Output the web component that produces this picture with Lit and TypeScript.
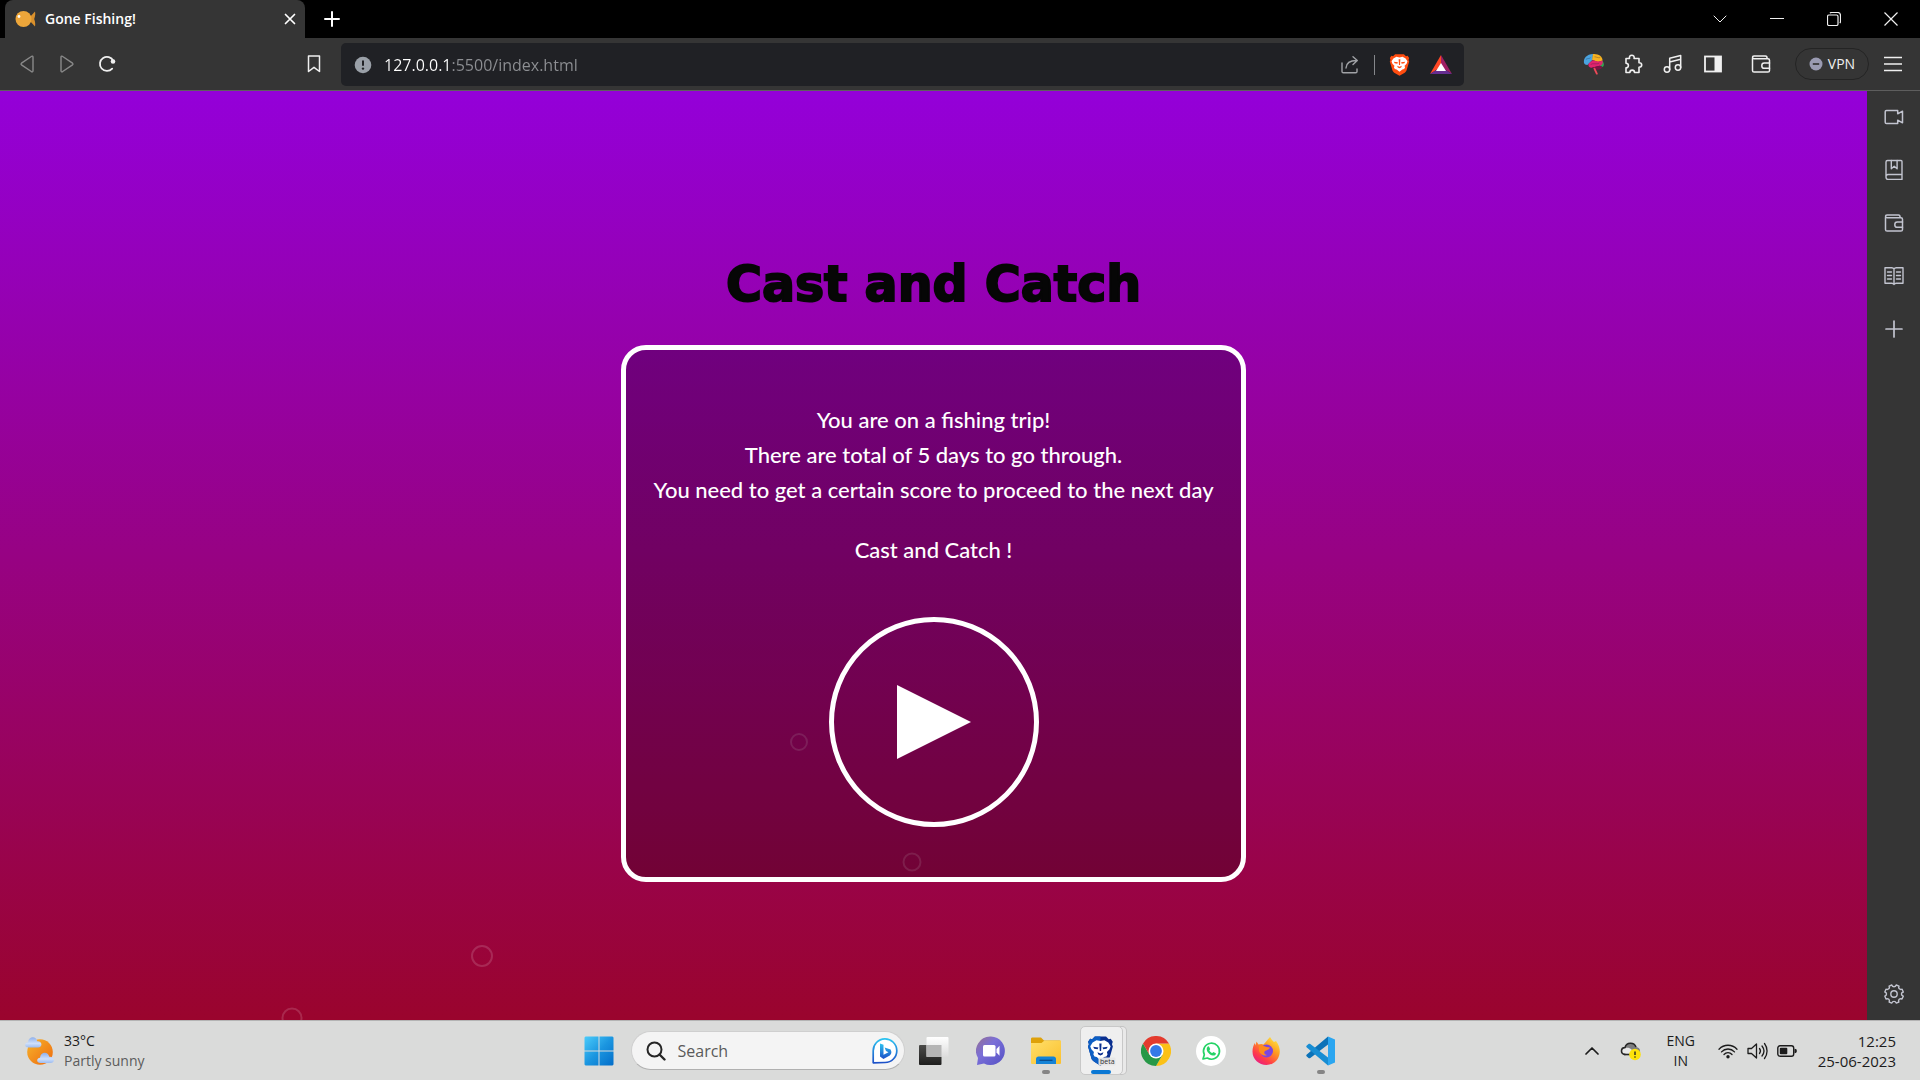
import { LitElement, html, css, svg } from "lit";
import { customElement } from "lit/decorators.js";

const icon = (w: number, h: number, body: unknown, vb = `0 0 ${w} ${h}`) => html`
  <svg width=${w} height=${h} viewBox=${vb} preserveAspectRatio="none" fill="none" aria-hidden="true">${body}</svg>
`;

const line = (body: unknown, width = 1.6) => svg`
  <g stroke="currentColor" stroke-width=${width} stroke-linecap="round" stroke-linejoin="round">${body}</g>
`;

const shield = "M7 1.5h10l2.4 2.6 1.8-.5 1.8 3-.7 2.3.8 2.2-3 11.2c-.5 1.6-1.4 2.6-2.6 3.4L12 29.5l-5.500-3.800c-1.200-.800-2.100-1.800-2.600-3.400L.9 11.100l.8-2.200L1 6.600l1.800-3 1.800.5z";
const lion = svg`
  <path d="M12 5.800l3.500-.8 3.500 2.200 2.100 3.600-1 3-2.300 2.600.5 2.400-1 1.800-2 .6L12 24.300l-3.300-3.100-2-.6-1-1.800.5-2.400-2.300-2.600-1-3L5 7.200 8.500 5z" fill="#fff"/>
  <path d="M5.500 11.200l4.700.9-.7 1.700-3-.5zM18.500 11.200l-4.700.9.7 1.700 3-.5zM11 8.200h2l-.4 7.200h-1.200zM9.300 16.500l2.700 1.300 2.700-1.300-.8 2.200-1.900.9-1.900-.9z" fill="var(--face)"/>
`;

const icons = {
  fish: icon(22, 20, svg`
    <path d="M14 9l6-6.500c.5 2.500.3 4-.8 7.500 1.100 3.500 1.300 5 .8 7.500L14 11z" fill="#d9902c"/>
    <ellipse cx="8.500" cy="10" rx="8" ry="8" fill="#eda63a"/>
    <circle cx="4" cy="7.500" r="1.400" fill="#fff"/>`),
  close: icon(12, 12, line(svg`<path d="M1.500 1.500l9 9M10.500 1.500l-9 9"/>`, 1.7)),
  plus: icon(16, 16, line(svg`<path d="M8 1v14M1 8h14"/>`, 2)),
  chevron: icon(14, 8, line(svg`<path d="M1 1l6 6 6-6"/>`, 1)),
  minimize: icon(14, 2, svg`<path d="M0 .5h14" stroke="currentColor"/>`),
  restore: icon(14, 14, svg`<rect x=".5" y="3" width="10.500" height="10.500" rx="1.500" stroke="currentColor" stroke-width="1.200"/>
    <path d="M3 1.200c.4-.5.8-.7 1.500-.7h6c1.800 0 3 1.200 3 3v6c0 .7-.2 1.100-.7 1.500" stroke="currentColor" stroke-width="1.200"/>`),
  exit: icon(14, 14, svg`<path d="M.5.5l13 13M13.500.5l-13 13" stroke="currentColor" stroke-width="1.200"/>`),
  back: icon(14, 18, line(svg`<path d="M13 2.200v13.600c0 1-1 1.400-1.700.7L1.500 9.800c-.6-.5-.6-1.100 0-1.600l9.800-6.700c.7-.7 1.700-.3 1.700.7z"/>`, 1.4)),
  forward: icon(14, 18, line(svg`<path d="M1 2.200v13.600c0 1 1 1.400 1.700.7l9.800-6.700c.6-.5.6-1.100 0-1.600L2.700 1.500C2 .8 1 1.200 1 2.200z"/>`, 1.4)),
  reload: icon(18, 18, svg`<path d="M14.200 13.600A7 7 0 1 1 15.300 6" stroke="currentColor" stroke-width="1.800" stroke-linecap="round"/>
    <circle cx="15" cy="6.500" r="2.300" fill="currentColor"/>`),
  bookmark: icon(14, 18, line(svg`<path d="M1.500 1h11v15.500L7 12.300l-5.500 4.200z"/>`, 1.5)),
  info: icon(18, 18, svg`<circle cx="9" cy="9" r="8.300" fill="#9aa0a8"/><path d="M9 4.500v5.300" stroke="#202124" stroke-width="2"/><circle cx="9" cy="12.600" r="1.200" fill="#202124"/>`),
  share: icon(20, 20, line(svg`<path d="M2 8v8.500c0 .8.500 1.300 1.300 1.300h12.400c.8 0 1.300-.5 1.300-1.300V14"/><path d="M6 13c.3-5 3.500-7.500 10.500-7.500M13 1.800l4.300 3.700-4.300 4"/>`, 1.4)),
  braveShield: icon(21, 24, svg`<path d=${shield} fill="#ff4d10"/>${lion}`, "0 0 24 31"),
  bat: icon(24, 22, svg`<path d="M12 1L1 20l11-7z" fill="#ff4724"/><path d="M12 1l11 19-11-7z" fill="#9e1f63"/><path d="M1 20h22l-11-7z" fill="#662d91"/><path d="M12 9l-5 8h10z" fill="#fff"/>`),
  brain: icon(21, 22, svg`
    <path d="M20 9c2.500 3 2.200 6 .6 7.500L16 14z" fill="#32a852"/>
    <path d="M1 11.500C.2 6 4 1.500 10.500 1.200L10 8l-5 6c-1.500.3-3.500-.5-4-2.500z" fill="#4aa3df"/>
    <path d="M10.500 1.200C16 .6 20.500 4 20.500 9l-5 1.500L9.500 8z" fill="#f6b221"/>
    <path d="M6 12.500l4-4 6 1.500 4.500-.8c.8 3-.5 5.500-3 6L9 17.500c-2.500 0-4-2.500-3-5z" fill="#e0236f"/>
    <path d="M9.500 17.500l8-2.500 2.800 1.500c-1.300 3-4.800 4-8.300 3z" fill="#7d1046"/>
    <path d="M12 18.500l2.500 6" stroke="#ef4958" stroke-width="2" stroke-linecap="round"/>
    <path d="M3 7.500c2-1.500 4-.5 5-2M12 4.500c2 0 3.500 1.500 6 1M8 13.500c3-2 6 .5 9-1.500" stroke="#2a2335" stroke-opacity=".35"/>`, "0 0 22 26"),
  puzzle: icon(20, 20, line(svg`<path d="M3 4.500h3.500C6 2.300 7.300 1.200 8.800 1.200s2.800 1.100 2.300 3.300H16v4.300c1.700 0 2.700.9 2.700 2.200s-1 2.200-2.700 2.200V18.500h-4.500c0-1.600-.9-2.400-2.300-2.400s-2.300.8-2.300 2.400H3v-4.700c1.500 0 2.400-.9 2.400-2.300S4.500 9.200 3 9.200z"/>`, 1.6)),
  music: icon(20, 20, line(svg`<circle cx="4" cy="15.500" r="2.700"/><circle cx="15" cy="13.500" r="2.700"/><path d="M6.700 15.500V4.200l11-2.700v12M6.700 8l11-2.700"/>`, 1.5)),
  panel: icon(18, 18, svg`<rect x="1" y="1.500" width="16" height="15" stroke="currentColor" stroke-width="1.800"/><path d="M10.500 1.500H17v15h-6.500z" fill="currentColor"/>`),
  wallet: icon(20, 20, line(svg`<path d="M1.500 4.500v12c0 1 .6 1.600 1.600 1.600h13.800c1 0 1.600-.6 1.600-1.600V6.300c0-1-.6-1.600-1.600-1.600H3C1 4.700 1 2 3 2h11.500c1 0 1.600.7 1.600 2.500"/><path d="M18.500 9h-5.300c-3.200 0-3.200 5.300 0 5.300h5.300"/>`, 1.5)),
  menu: icon(18, 16, svg`<path d="M0 1.500h18M0 8h18M0 14.500h18" stroke="currentColor" stroke-width="1.700"/>`),
  minus: icon(14, 14, svg`<circle cx="7" cy="7" r="6.500" fill="#9a9bb2"/><path d="M3.800 7h6.400" stroke="#333" stroke-width="1.700"/>`),
  camera: icon(20, 16, line(svg`<path d="M2.500 1.500h11.200v3.300l4.800-2.600v11.600l-4.800-2.600v3.300H2.500c-.9 0-1.300-.5-1.300-1.300V2.800c0-.8.400-1.300 1.300-1.300z"/>`, 1.5)),
  book: icon(20, 22, line(svg`<path d="M18 15.500V2.500c0-.6-.4-1-1-1H3.500C2.500 1.500 2 2 2 3v15c0 1.600.7 2.400 2 2.400h14M2 17.700c0-1.400.7-2.200 2-2.200h14v4.900"/><path d="M7.300 1.500v8.300l2.900-2.600 2.900 2.600V1.500"/>`, 1.4)),
  reader: icon(20, 20, line(svg`<path d="M10 3c-.5-1-1.200-1.300-2.200-1.300H1v15.500h6.800c1 0 1.700.3 2.200 1.300.5-1 1.200-1.300 2.200-1.300H19V1.700h-6.800c-1 0-1.700.3-2.200 1.300zM10 3v15.500M3.500 6H7.500M3.500 9.500H7.500M3.500 13H7.500M12.500 6h4M12.500 9.500h4M12.500 13h4"/>`, 1.4)),
  add: icon(18, 18, line(svg`<path d="M9 1v16M1 9h16"/>`, 1.7)),
  gear: icon(20, 20, line(svg`<circle cx="10" cy="10" r="3.200"/><path d="M7.800 1c.8 2.300 3.600 2.300 4.400 0l2.800 1.100c-1 2.300.9 4 3.100 3.100l1.200 2.800c-2.500.8-2.500 3.300 0 4.100L18 15c-2.200-1-4.100.8-3.100 3l-2.700 1.100c-.8-2.300-3.600-2.300-4.400 0L5.100 18c1-2.200-.9-4-3.100-3L.8 12.100c2.300-.8 2.300-3.300 0-4.100L2 5.200c2.200.9 4.100-.8 3.100-3.100z"/>`, 1.4)),
  play: icon(76, 74, svg`<path d="M1 0l74 37-74 37z" fill="currentColor"/>`),
  weather: icon(32, 32, svg`
    <defs>
      <linearGradient id="sun" x1="0" y1="0" x2="1" y2="1"><stop stop-color="#f6b42c"/><stop offset="1" stop-color="#ee6a0e"/></linearGradient>
      <linearGradient id="cloud" x1="0" y1="0" x2="0" y2="1"><stop stop-color="#8fb0ec"/><stop offset=".6" stop-color="#cfe0fb"/><stop offset="1" stop-color="#9dbcf0"/></linearGradient>
    </defs>
    <circle cx="16" cy="17" r="12.800" fill="url(#sun)"/>
    <path d="M4.500 12.500C.2 12.500.2 7.500 4 7.200 4.500 1 12.500.8 13.200 6.200c5.300-.5 5.800 6.300.8 6.300z" fill="url(#cloud)"/>
    <path d="M16.500 28c-4.300 0-4.300-5-.5-5.300.5-6.200 8.300-6.400 9.200-1 6-.5 6.300 6.300 1.300 6.300z" fill="url(#cloud)"/>`),
  start: icon(30, 30, svg`
    <defs><linearGradient id="win" x1="0" y1="0" x2="30" y2="30" gradientUnits="userSpaceOnUse"><stop stop-color="#4ccdfb"/><stop offset=".5" stop-color="#1b96e0"/><stop offset="1" stop-color="#026cc8"/></linearGradient></defs>
    <path d="M1.500.5h13v14H.5v-13zM15.500.5h13l1 1v13h-14zM.5 15.500h14v14h-13l-1-1zM15.500 15.500h14v13l-1 1h-13z" fill="url(#win)"/>`),
  search: icon(20, 20, svg`<circle cx="8.500" cy="8.500" r="7" stroke="#262626" stroke-width="2"/><path d="M13.500 13.500l5 5" stroke="#262626" stroke-width="2.400" stroke-linecap="round"/>`),
  bing: icon(26, 26, svg`
    <defs><linearGradient id="bing" x1="0" y1="0" x2="0" y2="1"><stop stop-color="#2cc3f0"/><stop offset="1" stop-color="#1c50c8"/></linearGradient></defs>
    <path d="M1.200 24.800V13A11.800 11.800 0 1 1 13 24.500z" stroke="url(#bing)" stroke-width="1.700" stroke-linejoin="round" fill="#fff"/>
    <path d="M8 5.500l3.500 1.300v10l5-2.600-2.500-1.300-1.400-3.500 6 2.200c1.500 2.700.8 4.600-.8 5.800l-6.400 3.500L8 18.500z" fill="url(#bing)"/>`),
  taskview: icon(30, 28, svg`
    <defs>
      <linearGradient id="tvd" x1="0" y1="0" x2="0" y2="1"><stop stop-color="#4b4b49"/><stop offset="1" stop-color="#1e1e1d"/></linearGradient>
      <linearGradient id="tvl" x1="0" y1="0" x2="0" y2="1"><stop stop-color="#fff"/><stop offset="1" stop-color="#dcdcdc"/></linearGradient>
    </defs>
    <rect y="8" width="22.500" height="20" rx="1" fill="url(#tvd)"/><rect x="7.500" width="22" height="20" rx="1" fill="url(#tvl)"/>
    <rect x="7.500" y="8" width="15" height="12" fill="#b5b5b5"/>`),
  chat: icon(30, 30, svg`
    <defs><linearGradient id="chat" x1="0" y1="0" x2="1" y2="1"><stop stop-color="#97708f"/><stop offset=".4" stop-color="#7a6fd8"/><stop offset="1" stop-color="#5450c4"/></linearGradient></defs>
    <path d="M15 .5A14.300 14.300 0 1 1 8 27.500L1 29l1-7A14.300 14.300 0 0 1 15 .5z" fill="url(#chat)"/>
    <rect x="7" y="9" width="12.500" height="11.500" rx="1.500" fill="#fff"/><path d="M20.500 13l3-3.200v10l-3-3.200z" fill="#fff"/>`),
  folder: icon(32, 28, svg`
    <defs><linearGradient id="fold" x1="0" y1="0" x2="1" y2="1"><stop stop-color="#ffdf6b"/><stop offset="1" stop-color="#fbc02d"/></linearGradient></defs>
    <path d="M1 2c0-1 .5-1.500 1.500-1.500H11l3 3h15c1 0 1.500.5 1.500 1.500v8H1z" fill="#dea10a"/>
    <path d="M1 6h10.500l3-2.500H31v22c0 1-.5 1.500-1.500 1.500h-27C1.500 27 1 26.500 1 25.500z" fill="url(#fold)"/>
    <path d="M6 27v-5c0-1.600 1-2.500 2.500-2.500h15c1.500 0 2.500.9 2.500 2.500v5z" fill="#1583d6"/><path d="M9.500 23.300h13" stroke="#0b4b8c" stroke-width="1.300"/>`),
  chrome: icon(30, 30, svg`
    <path d="M15 15v-7.500h13A15 15 0 0 1 15 30l6.500-11.200z" fill="#fbc116"/>
    <path d="M2 7.500A15 15 0 0 0 15 30l6.500-11.300L8.500 18.800z" fill="#279847"/><path d="M2 7.500A15 15 0 0 1 28 7.500H15L8.500 18.700z" fill="#e33b2e"/>
    <circle cx="15" cy="15" r="7.500" fill="#fff"/><circle cx="15" cy="15" r="5.900" fill="#3479e8"/>`),
  whatsapp: icon(30, 30, svg`
    <circle cx="15" cy="15" r="15" fill="#fff"/>
    <path d="M7 23l1.300-4.300A8 8 0 1 1 11.300 22z" stroke="#25d366" stroke-width="1.700" stroke-linejoin="round"/>
    <path d="M11.600 10.800l1.200-.5 1.400 2.800-.8 1.300c.7 1.300 1.600 2.100 2.900 2.700l1-1.200 2.600 1.300c.1 1.800-1.400 2.700-3.200 2.300-3-.7-6-3.700-6-6.600 0-.8.300-1.500.9-2.100z" fill="#25d366"/>`),
  firefox: icon(30, 30, svg`
    <defs><linearGradient id="ff" x1=".9" y1="0" x2=".2" y2="1"><stop stop-color="#fff04a"/><stop offset=".4" stop-color="#ff9a1f"/><stop offset=".75" stop-color="#ff3b4a"/><stop offset="1" stop-color="#e51a8a"/></linearGradient></defs>
    <path d="M19 1c1.500 2 2 3.500 4 5l2-1c3 4 4.300 8.500 3.600 12.500C27.500 24.500 22 29 15.500 29 8 29 1.500 23.500 1.500 15.500c0-3.500 1-6.500 2.300-8.500l.7 2.500 1-4 2 3c2-.7 3.500-.7 5 0 2-1.500 3.500-4.500 6.500-7.500z" fill="url(#ff)"/>
    <circle cx="15.500" cy="15" r="6.500" fill="#7b45e0"/>
    <path d="M8 10c3-1 5 0 7.500 1l3.500.5c-1 2.500-3.500 2.500-5 3.500-1.500 1.500-.5 3.500 2 4-3 1.500-7-.5-8-4z" fill="#ff8a1c"/>`),
  vscode: icon(30, 30, svg`
    <path d="M22 .5L29 3.500v23l-7 3z" fill="#2ba6f0"/>
    <path d="M22 .5L.8 18.500c-.7.600-.7 1.300 0 1.900l1.700 1.500c.6.500 1.100.5 1.800.1L22 8.500z" fill="#0b72b8"/>
    <path d="M22 29.500L.8 11.500c-.7-.6-.7-1.300 0-1.900l1.700-1.500c.6-.5 1.100-.5 1.800-.1L22 21.500z" fill="#178dd3"/>`),
  braveApp: icon(30, 30, svg`
    <g transform="translate(1 -1) scale(1.120 1.040)"><path d=${shield} fill="#0a2f8f"/><path d="M12 1.500H7L4.600 4.100l-1.800-.5-1.800 3 .7 2.300-.8 2.200 3 11.200c.5 1.600 1.400 2.600 2.600 3.400l5.500 3.800z" fill="#0d5fc4"/>${lion}</g>
    <rect x="12.500" y="21.500" width="17" height="8" rx="1" fill="#e6e6e6" fill-opacity=".95"/>
    <text x="14" y="28" font-size="7" font-family="Open Sans, sans-serif" fill="#333">beta</text>`),
  caret: icon(14, 8, line(svg`<path d="M1 7l6-6 6 6"/>`, 1.7)),
  onedrive: icon(22, 20, svg`
    <path d="M5.500 13.500C0 13.500.5 6.500 5 6.500 6.500 1 14 .8 16 6c3.500.3 4.500 3 4 5.500z" fill="#7d7d7d"/>
    <path d="M4.500 13.700c-4-.3-4.300-5 .5-6.500 4-1.500 8 1 9 6.500z" fill="#e8e8e8"/>
    <path d="M5.500 13.500C0 13.500.5 6.500 5 6.500 6.500 1 14 .8 16 6" stroke="#262626" stroke-width="1.600"/><path d="M4 13.500h8" stroke="#262626" stroke-width="1.600"/>
    <circle cx="15" cy="13.500" r="5.800" fill="#fde30b"/><path d="M15 10.500v3.600" stroke="#222" stroke-width="1.400"/><circle cx="15" cy="16" r=".8" fill="#222"/>`),
  wifi: icon(20, 16, svg`<g stroke="#1c1c1c" stroke-width="1.300" stroke-linecap="round"><path d="M1 6.200c5-5.300 13-5.300 18 0M3.500 8.900c3.600-3.900 9.400-3.900 13 0M6 11.500c2.200-2.400 5.800-2.400 8 0"/></g><circle cx="10" cy="13.800" r="1.700" fill="#1c1c1c"/>`),
  volume: icon(21, 18, svg`<g stroke="#1c1c1c" stroke-width="1.300" stroke-linecap="round" stroke-linejoin="round"><path d="M1 6.500h3.500L9.500 2v14l-5-4.500H1zM12.500 6.500c1.200 1.500 1.200 3.500 0 5M15 4c2.400 3 2.400 7 0 10M17.500 1.500c3.400 4.500 3.400 10.500 0 15"/></g>`),
  battery: icon(20, 12, svg`<rect x=".8" y=".8" width="15.900" height="10.400" rx="2.200" stroke="#1c1c1c" stroke-width="1.400"/><rect x="2.800" y="2.800" width="7.500" height="6.400" rx="1" fill="#1c1c1c"/><path d="M17.500 3.800c1.800 0 2.300.8 2.300 2.200s-.5 2.200-2.300 2.200z" fill="#1c1c1c"/>`),
};

const base = css`
  :host, * { box-sizing: border-box; }
  svg { display: block; flex: none; }
  button, input {
    margin: 0; padding: 0; border: 0; background: none; color: inherit; font: inherit;
  }
  button { display: flex; align-items: center; justify-content: center; cursor: pointer; }
`;

const iconButton = (name: string, label: string, glyph: unknown) => html`
  <button class="icon ${name}" aria-label=${label}>${glyph}</button>
`;

@customElement("browser-header")
export class BrowserHeader extends LitElement {
  static styles = [base, css`
    :host { display: block; color: #f0f0f0; border-bottom: 1px solid #5e5e5e; background: #353535; }
    .tabs { display: flex; height: 38px; background: #000; padding: 0 1px 0 5px; }
    .tab {
      display: flex; align-items: center; width: 300px; padding: 0 3px 0 10px;
      background: #353535; border-radius: 8px 8px 0 0; color: #fff;
      font-size: 14px; font-weight: 600; line-height: 20px;
    }
    .title { flex: 1; padding-left: 8px; }
    .tab .icon { width: 24px; height: 24px; }
    .new { width: 54px; color: #fff; }
    .window { display: flex; margin-left: auto; }
    .window button { width: 57px; }
    .toolbar { display: flex; height: 52px; padding: 5px 7px 4px; }
    .group { display: flex; align-items: center; padding-bottom: 2px; }
    .nav { flex: 0 0 334px; padding-right: 7px; }
    .tools { flex: 0 0 449px; justify-content: flex-end; }
    .icon { width: 40px; height: 40px; }
    .dim { color: #8a8a8a; }
    .mark { margin-left: auto; }
    .address {
      flex: 1; display: flex; align-items: center; min-width: 0; padding: 0 3px 0 13px;
      background: #202125; border-radius: 5px;
    }
    .url {
      flex: 1; min-width: 0; height: 32px; padding-left: 12px; outline: none;
      font-size: 16px; line-height: 24px; color: transparent;
      background: linear-gradient(90deg, #fff 80px, #8d8f93 80px);
      -webkit-background-clip: text; background-clip: text;
    }
    .share { color: #a0a2a6; }
    .rule { width: 1px; height: 20px; margin: 0 4px; background: #85878b; }
    .shield { --face: #ff4d10; margin-right: 2px; }
    .last { margin-right: 8px; }
    .vpn {
      gap: 5px; width: 74px; height: 32px; margin: 0 4px 0 14px;
      border: 1px solid #242424; border-radius: 16px; font-size: 14px;
    }
  `];

  render() {
    return html`
      <div class="tabs">
        <div class="tab">
          ${icons.fish}<span class="title">Gone Fishing!</span>
          ${iconButton("", "Close tab", icons.close)}
        </div>
        <button class="new" aria-label="New tab">${icons.plus}</button>
        <div class="window">
          <button aria-label="Search tabs">${icons.chevron}</button>
          <button aria-label="Minimize">${icons.minimize}</button>
          <button aria-label="Restore">${icons.restore}</button>
          <button aria-label="Close">${icons.exit}</button>
        </div>
      </div>
      <div class="toolbar">
        <div class="group nav">
          ${iconButton("dim", "Back", icons.back)}
          ${iconButton("dim", "Forward", icons.forward)}
          ${iconButton("", "Reload", icons.reload)}
          ${iconButton("mark", "Bookmark", icons.bookmark)}
        </div>
        <div class="address">
          ${icons.info}
          <input class="url" type="text" aria-label="Address" .value=${"127.0.0.1:5500/index.html"} />
          ${iconButton("share", "Share", icons.share)}
          <span class="rule"></span>
          ${iconButton("shield", "Brave Shields", icons.braveShield)}
          ${iconButton("", "Rewards", icons.bat)}
        </div>
        <div class="group tools">
          ${iconButton("", "Brain extension", icons.brain)}
          ${iconButton("", "Extensions", icons.puzzle)}
          ${iconButton("", "Media", icons.music)}
          ${iconButton("last", "Sidebar", icons.panel)}
          ${iconButton("", "Wallet", icons.wallet)}
          <button class="vpn">${icons.minus}VPN</button>
          ${iconButton("", "Menu", icons.menu)}
        </div>
      </div>
    `;
  }
}

@customElement("browser-sidebar")
export class BrowserSidebar extends LitElement {
  static styles = [base, css`
    :host {
      display: flex; flex-direction: column; align-items: center; gap: 13px;
      width: 53px; padding: 6px 0; background: #353535; color: #c2c4cf;
    }
    button { width: 40px; height: 40px; }
    .settings { margin-top: auto; }
  `];

  render() {
    return html`
      <button aria-label="Talk">${icons.camera}</button>
      <button aria-label="Bookmarks">${icons.book}</button>
      <button aria-label="Wallet">${icons.wallet}</button>
      <button aria-label="Reading list">${icons.reader}</button>
      <button aria-label="Add">${icons.add}</button>
      <button class="settings" aria-label="Settings">${icons.gear}</button>
    `;
  }
}

@customElement("fishing-game")
export class FishingGame extends LitElement {
  static styles = [base, css`
    :host {
      position: relative; display: flex; flex-direction: column; align-items: center;
      justify-content: center; overflow: hidden;
      background: linear-gradient(#9400d9, #9a042d);
    }
    h1 {
      margin: 0; padding: 20px 0 24px; color: #060606;
      font: 700 49px/72px "DejaVu Sans", sans-serif;
      -webkit-text-stroke: 2px #060606;
    }
    .card {
      position: relative; display: flex; flex-direction: column; align-items: center;
      padding: 52px 20px 50px; max-width: 100%; width: 625px;
      border: 5px solid #fff; border-radius: 25px; background: rgba(0, 0, 0, 0.25);
      color: #fff; font: 500 22px/35px Lato, sans-serif; text-align: center;
    }
    p { margin: 0 0 25px; }
    .last { margin-bottom: 50px; }
    .play { width: 210px; height: 210px; border: 5px solid #fff; border-radius: 50%; }
    .bubble {
      position: absolute; border: 2px solid rgba(255, 255, 255, 0.15); border-radius: 50%;
      aspect-ratio: 1; transform: translate(-50%, -50%);
    }
  `];

  private bubbles = [
    { x: 42.8, y: 70.1, size: 18 },
    { x: 48.85, y: 83, size: 19 },
    { x: 25.8, y: 93.1, size: 22 },
    { x: 15.66, y: 99.8, size: 21 },
  ];

  render() {
    return html`
      ${this.bubbles.map((b) => html`
        <span class="bubble" style="left:${b.x}%;top:${b.y}%;width:${b.size}px"></span>
      `)}
      <h1>Cast and Catch</h1>
      <section class="card">
        <p>
          You are on a fishing trip!<br />
          There are total of 5 days to go through.<br />
          You need to get a certain score to proceed to the next day
        </p>
        <p class="last">Cast and Catch !</p>
        <button class="play" aria-label="Play">${icons.play}</button>
      </section>
    `;
  }
}

@customElement("task-bar")
export class TaskBar extends LitElement {
  static styles = [base, css`
    :host {
      display: grid; grid-template-columns: 1fr auto 1fr; height: 60px;
      border-top: 1px solid #b4b4b4; background: #dadbda; color: #1c1c1c;
      font-size: 14px; line-height: 20px;
    }
    .weather { justify-self: start; gap: 8px; padding-left: 24px; text-align: left; }
    .sub { color: #5c5c5c; }
    .apps { display: flex; align-items: center; padding-right: 5px; }
    .app { position: relative; width: 55px; height: 49px; }
    .startbtn { width: 64px; }
    .search {
      display: flex; align-items: center; width: 274px; height: 39px; padding: 0 6px 0 14px;
      border: 1px solid #cfcfcf; border-bottom-color: #b0b0b0; border-radius: 20px; background: #f4f4f4;
    }
    .search input { flex: 1; min-width: 0; padding-left: 12px; outline: none; font-size: 16px; }
    .search input::placeholder { color: #5a5a5a; opacity: 1; }
    .first { width: 59px; }
    .running::after {
      content: ""; position: absolute; left: 50%; bottom: 1px; width: 8px; height: 4px;
      margin-left: -4px; border-radius: 2px; background: #858585;
    }
    .active { --face: #0a2f8f; }
    .active::before {
      content: ""; position: absolute; inset: 0 6px; border-radius: 5px;
      border: 1px solid #c8c8c8; background: #efefef; box-shadow: 4px 0 0 -1px #e9e9e9, 4px 0 0 0 #c4c4c4;
    }
    .active::after { width: 20px; margin-left: -10px; background: #0a78d4; }
    .active svg { position: relative; }
    .tray { display: flex; align-items: center; justify-self: end; padding-right: 24px; }
    .caret { width: 39px; height: 40px; }
    .lang { width: 60px; text-align: center; }
    .status { gap: 9px; padding: 0 21px 0 7px; }
    .clock { display: block; text-align: right; font-size: 15px; }
  `];

  private apps = [
    { label: "Task view", glyph: icons.taskview, cls: "first" },
    { label: "Chat", glyph: icons.chat, cls: "" },
    { label: "File Explorer", glyph: icons.folder, cls: "running" },
    { label: "Brave Beta", glyph: icons.braveApp, cls: "running active" },
    { label: "Chrome", glyph: icons.chrome, cls: "" },
    { label: "WhatsApp", glyph: icons.whatsapp, cls: "" },
    { label: "Firefox", glyph: icons.firefox, cls: "" },
    { label: "Visual Studio Code", glyph: icons.vscode, cls: "running" },
  ];

  render() {
    return html`
      <button class="weather">
        ${icons.weather}
        <span>33°C<br /><span class="sub">Partly sunny</span></span>
      </button>
      <div class="apps">
        <button class="app startbtn" aria-label="Start">${icons.start}</button>
        <label class="search">
          ${icons.search}
          <input type="search" placeholder="Search" aria-label="Search" />
          ${icons.bing}
        </label>
        ${this.apps.map((a) => html`
          <button class="app ${a.cls}" aria-label=${a.label}>${a.glyph}</button>
        `)}
      </div>
      <div class="tray">
        <button class="caret" aria-label="Show hidden icons">${icons.caret}</button>
        <button class="caret" aria-label="OneDrive">${icons.onedrive}</button>
        <button class="lang">ENG<br />IN</button>
        <button class="status" aria-label="Network, volume and battery">
          ${icons.wifi}${icons.volume}${icons.battery}
        </button>
        <button class="clock">12:25<br />25-06-2023</button>
      </div>
    `;
  }
}

@customElement("app-root")
export class AppRoot extends LitElement {
  static styles = css`
    :host {
      display: flex; flex-direction: column; min-height: 100vh;
      font-family: "Open Sans", "Noto Sans", sans-serif;
    }
    .view { flex: 1; display: flex; }
    .page { flex: 1; min-width: 0; }
  `;

  render() {
    return html`
      <browser-header></browser-header>
      <div class="view">
        <fishing-game class="page"></fishing-game>
        <browser-sidebar></browser-sidebar>
      </div>
      <task-bar></task-bar>
    `;
  }
}
